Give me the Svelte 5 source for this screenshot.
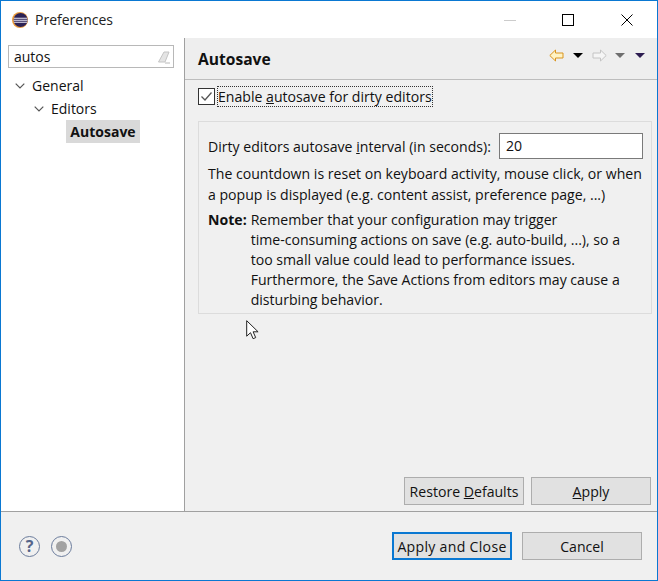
<script>
	const tree = [
		{ label: 'General', depth: 0 },
		{ label: 'Editors', depth: 1 }
	];
	const note = [
		'Remember that your configuration may trigger',
		'time-consuming actions on save (e.g. auto-build, ...), so a',
		'too small value could lead to performance issues.',
		'Furthermore, the Save Actions from editors may cause a',
		'disturbing behavior.'
	];
</script>

<div class="window">
	<header class="titlebar">
		<svg class="app-icon" width="16" height="16" viewBox="0 0 16 16">
			<circle cx="8" cy="8" r="8" fill="#e89a3c" />
			<circle cx="8.6" cy="8" r="7" fill="#2c2255" />
			<path d="M2 6.2h13M1.6 8.2h14M2 10.2h13" stroke="#e8e6f2" stroke-width="1.1" />
		</svg>
		<span class="title">Preferences</span>
		<div class="win-controls">
			<span class="win-btn"><svg width="12" height="12" viewBox="0 0 12 12"><path d="M0 6.5h12" stroke="#ccc" /></svg></span>
			<span class="win-btn"><svg width="12" height="12" viewBox="0 0 12 12"><rect x=".5" y=".5" width="11" height="11" fill="none" stroke="#000" /></svg></span>
			<span class="win-btn"><svg width="12" height="12" viewBox="0 0 12 12"><path d="M.5.5l11 11M11.500.5l-11 11" stroke="#000" /></svg></span>
		</div>
	</header>

	<div class="main">
		<aside class="sidebar">
			<div class="filter">
				<span>autos</span>
				<svg width="14" height="14" viewBox="0 0 14 14">
					<path d="M1.500 12L7 2h5l-4 10z" fill="#e4e4e4" stroke="#c4c4c4" />
					<path d="M8 13h5" stroke="#b8b8b8" />
				</svg>
			</div>
			<ul class="tree">
				{#each tree as node}
					<li class="depth-{node.depth}">
						<svg width="10" height="6" viewBox="0 0 10 6"><path d="M.7.7L5 5l4.300-4.300" fill="none" stroke="#555" stroke-width="1.200" /></svg>
						<span>{node.label}</span>
					</li>
				{/each}
				<li class="leaf"><b>Autosave</b></li>
			</ul>
		</aside>

		<section class="content">
			<div class="page-head">
				<h1>Autosave</h1>
				<div class="nav-tools">
					<svg width="15" height="13" viewBox="0 0 15 13"><path d="M.8 6.500L6.500 1v3h7.500v5H6.500v3z" fill="#fff3c4" stroke="#d9941e" /></svg>
					<i class="drop dark"></i>
					<svg class="fwd" width="15" height="13" viewBox="0 0 15 13"><path d="M14.200 6.500L8.500 1v3H1v5h7.500v3z" fill="#f5f5f5" stroke="#c4c4c4" /></svg>
					<i class="drop grey"></i>
					<i class="drop purple"></i>
				</div>
			</div>

			<div class="page-body">
				<label class="enable">
					<span class="check">
						<svg width="13" height="11" viewBox="0 0 13 11"><path d="M1.500 5.500L5 9l6.500-7.500" fill="none" stroke="#555" stroke-width="1.300" /></svg>
					</span>
					<span class="focus">Enable <u>a</u>utosave for dirty editors</span>
				</label>

				<div class="group">
					<div class="interval">
						<span>Dirty editors autosave <u>i</u>nterval (in seconds):</span>
						<div class="number">20</div>
					</div>
					<p class="hint">The countdown is reset on keyboard activity, mouse click, or when<br />a popup is displayed (e.g. content assist, preference page, ...)</p>
					<div class="note">
						<b>Note:</b>
						<p>
							{#each note as line}{line}<br />{/each}
						</p>
					</div>
				</div>

				<div class="page-actions">
					<button>Restore <u>D</u>efaults</button>
					<button class="wide"><u>A</u>pply</button>
				</div>
			</div>
		</section>
	</div>

	<footer class="footer">
		<span class="round-btn help">?</span>
		<span class="round-btn"><i class="record"></i></span>
		<div class="actions">
			<button class="primary">Apply and Close</button>
			<button class="cancel">Cancel</button>
		</div>
	</footer>

	<svg class="cursor" width="14" height="20" viewBox="0 0 14 20">
		<path d="M.7.7v15.500l3.800-3.500 2.600 6 2.600-1.100-2.600-5.800h5z" fill="#fff" stroke="#222" />
	</svg>
</div>

<style>
	:global(body) {
		margin: 0;
	}

	.window {
		position: relative;
		box-sizing: border-box;
		width: 658px;
		height: 581px;
		display: flex;
		flex-direction: column;
		background: #fff;
		border: 1px solid #0a78d2;
		font-family: 'Open Sans', 'Noto Sans', sans-serif;
		font-size: 14.1px;
		color: #111;
		overflow: hidden;
	}

	.titlebar {
		height: 37px;
		flex: none;
		display: flex;
		align-items: center;
		padding-left: 11px;
	}

	.title {
		margin-left: 7px;
		color: #222;
		font-size: 14px;
	}

	.win-controls {
		margin-left: auto;
		display: flex;
		padding-right: 1px;
	}

	.win-btn {
		width: 58px;
		height: 37px;
		display: flex;
		align-items: center;
		justify-content: center;
	}

	.win-btn:nth-child(2) {
		margin-right: 1px;
	}

	.main {
		flex: 1;
		display: flex;
		min-height: 0;
		border-bottom: 1px solid #a0a0a0;
	}

	.sidebar {
		width: 184px;
		flex: none;
		box-sizing: border-box;
		border-right: 1px solid #a0a0a0;
		padding: 7px 10px 0 7px;
		font-size: 14px;
	}

	.filter {
		height: 23px;
		box-sizing: border-box;
		border: 1px solid #b8b8b8;
		display: flex;
		align-items: center;
		justify-content: space-between;
		padding: 0 2px 0 5px;
	}

	.tree {
		list-style: none;
		margin: 6px 0 0;
		padding: 0;
	}

	.tree li {
		height: 23px;
		display: flex;
		align-items: center;
		gap: 7px;
	}

	.depth-0 {
		padding-left: 7px;
	}

	.depth-1 {
		padding-left: 26px;
	}

	.tree .leaf {
		margin-left: 58px;
		width: 74px;
		justify-content: center;
		background: #d9d9d9;
	}

	.content {
		flex: 1;
		min-width: 0;
		display: flex;
		flex-direction: column;
		background: #f0f0f0;
	}

	.page-head {
		height: 42px;
		flex: none;
		box-sizing: border-box;
		border-bottom: 1px solid #bdbdbd;
		display: flex;
		align-items: center;
		padding: 0 12px 0 13px;
		background: #eeeeee;
	}

	h1 {
		margin: 0;
		font-size: 15.6px;
		font-weight: 700;
	}

	.nav-tools {
		margin-left: auto;
		display: flex;
		align-items: center;
		gap: 9px;
		margin-top: -6px;
	}

	.fwd {
		margin-right: -1px;
	}

	.drop {
		width: 0;
		height: 0;
		border: 5px solid transparent;
		border-top: 5px solid #000;
		border-bottom: 0;
	}

	.drop.grey {
		border-top-color: #6e6e6e;
	}

	.drop.purple {
		border-top-color: #2c1c50;
		margin-left: 1px;
	}

	.page-body {
		flex: 1;
		display: flex;
		flex-direction: column;
		padding: 5px 5px 6px 13px;
		min-height: 0;
	}

	.enable {
		display: flex;
		align-items: center;
		gap: 3px;
		height: 22px;
	}

	.check {
		width: 15px;
		height: 15px;
		box-sizing: content-box;
		border: 1px solid #333;
		background: #fff;
		display: flex;
		align-items: center;
		justify-content: center;
	}

	.focus {
		outline: 1px dotted #333;
		line-height: 19px;
		white-space: nowrap;
	}

	.group {
		margin-top: 14px;
		box-sizing: border-box;
		height: 193px;
		border: 1px solid #dcdcdc;
		padding: 11px 8px 0 9px;
	}

	.interval {
		display: flex;
		align-items: center;
		justify-content: space-between;
	}

	.number {
		width: 144px;
		height: 26px;
		box-sizing: border-box;
		border: 1px solid #7a7a7a;
		background: #fff;
		padding-left: 6px;
		line-height: 24px;
	}

	.hint {
		margin: 5px 0 0;
		line-height: 20.5px;
		white-space: nowrap;
	}

	.note {
		display: flex;
		gap: 4px;
		margin-top: 5px;
		line-height: 20px;
	}

	.note p {
		margin: 0;
		white-space: nowrap;
	}

	.page-actions {
		margin-top: auto;
		margin-right: 1px;
		display: flex;
		justify-content: flex-end;
		gap: 7px;
	}

	button {
		height: 28px;
		box-sizing: border-box;
		background: #e1e1e1;
		border: 1px solid #adadad;
		font: inherit;
		color: #111;
		padding: 0;
		width: 120px;
	}

	.footer {
		height: 68px;
		flex: none;
		box-sizing: border-box;
		background: #f0f0f0;
		display: flex;
		align-items: center;
		gap: 11px;
		padding: 0 15px 0 18px;
	}

	.round-btn {
		width: 21px;
		height: 21px;
		box-sizing: border-box;
		border: 1px solid #6b7c9c;
		border-radius: 50%;
		display: flex;
		align-items: center;
		justify-content: center;
	}

	.help {
		font-size: 16px;
		line-height: 19px;
		font-weight: 700;
		color: #55658a;
	}

	.record {
		width: 11px;
		height: 11px;
		border-radius: 50%;
		background: #a2a2a2;
	}

	.actions {
		margin-left: auto;
		display: flex;
		gap: 10px;
	}

	.primary {
		border: 2px solid #0a78d2;
		letter-spacing: 0.3px;
	}

	.cursor {
		position: absolute;
		left: 245px;
		top: 319px;
	}
</style>
